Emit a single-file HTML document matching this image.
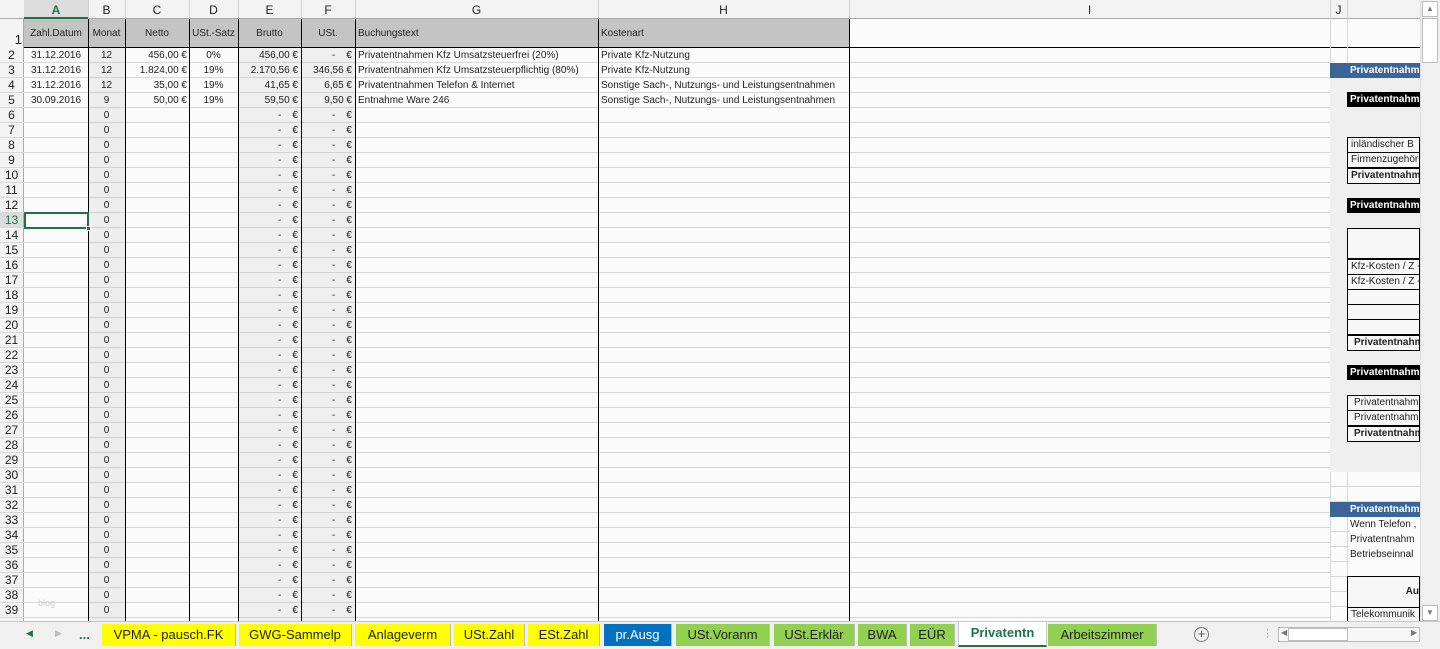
<!DOCTYPE html>
<html><head><meta charset="utf-8"><style>
*{margin:0;padding:0;box-sizing:border-box}
body{width:1440px;height:649px;overflow:hidden;background:#fff;font-family:"Liberation Sans",sans-serif;font-size:10px;color:#222;position:relative}
.a{position:absolute}
.t{position:absolute;line-height:15px;white-space:pre;font-size:10px}
.vl{position:absolute;top:19px;width:1px;height:602px}
.tab{position:absolute;top:624px;height:22px;line-height:22px;text-align:center;font-size:13px;color:#222;border-right:1px solid #bbb}
.box{position:absolute;left:1347px;width:73px;border:1px solid #000;background:#f7f7f7;line-height:14px;padding-left:3px;font-size:10px;overflow:hidden;white-space:nowrap}
.blk{position:absolute;left:1347px;width:73px;height:15px;background:#000;color:#fff;font-weight:bold;line-height:15px;padding-left:3px;font-size:10px;overflow:hidden;white-space:nowrap}
</style></head><body>
<div class="a" style="left:0;top:0;width:1420px;height:19px;background:#f3f3f3;border-bottom:1px solid #ababab"></div>
<div class="a" style="left:0;top:19px;width:24px;height:602px;background:#f3f3f3;border-right:1px solid #ababab"></div>
<div class="a" style="left:24px;top:48px;width:1306px;height:573px;background:#fbfbfb;background-image:repeating-linear-gradient(to bottom,transparent 0 14px,#d8d8d8 14px 15px)"></div>
<div class="a" style="left:88px;top:48px;width:37px;height:573px;background:#eeeeee;background-image:repeating-linear-gradient(to bottom,transparent 0 14px,#d0d0d0 14px 15px)"></div>
<div class="a" style="left:238px;top:48px;width:117px;height:573px;background:#efefef;background-image:repeating-linear-gradient(to bottom,transparent 0 14px,#d0d0d0 14px 15px)"></div>
<div class="a" style="left:0;top:48px;width:24px;height:573px;background-image:repeating-linear-gradient(to bottom,transparent 0 14px,#d8d8d8 14px 15px)"></div>
<div class="a" style="left:24px;top:19px;width:825px;height:29px;background:#c4c4c4;border-bottom:1px solid #000"></div>
<div class="a" style="left:849px;top:19px;width:571px;height:29px;background:#fbfbfb;border-bottom:1px solid #000"></div>
<div class="a" style="left:1330px;top:48px;width:90px;height:15px;background:#fbfbfb"></div>
<div class="a" style="left:1330px;top:63px;width:90px;height:409px;background:#efefef"></div>
<div class="a" style="left:1330px;top:472px;width:90px;height:149px;background:#fbfbfb;background-image:repeating-linear-gradient(to bottom,transparent 0 14px,#d8d8d8 14px 15px)"></div>
<div class="vl" style="left:88px;background:#000"></div>
<div class="vl" style="left:125px;background:#000"></div>
<div class="vl" style="left:189px;background:#000"></div>
<div class="vl" style="left:238px;background:#000"></div>
<div class="vl" style="left:301px;background:#000"></div>
<div class="vl" style="left:355px;background:#000"></div>
<div class="vl" style="left:598px;background:#000"></div>
<div class="vl" style="left:849px;background:#000"></div>
<div class="vl" style="left:1330px;background:#d8d8d8;height:44px"></div>
<div class="vl" style="left:1347px;background:#d8d8d8;height:44px"></div>
<div class="vl" style="left:1330px;top:472px;background:#d8d8d8;height:149px"></div>
<div class="vl" style="left:1347px;top:472px;background:#d8d8d8;height:104px"></div>
<div class="a" style="left:24px;top:0;width:1396px;height:19px;background-image:linear-gradient(#d0d0d0,#d0d0d0),linear-gradient(#d0d0d0,#d0d0d0),linear-gradient(#d0d0d0,#d0d0d0),linear-gradient(#d0d0d0,#d0d0d0),linear-gradient(#d0d0d0,#d0d0d0),linear-gradient(#d0d0d0,#d0d0d0),linear-gradient(#d0d0d0,#d0d0d0),linear-gradient(#d0d0d0,#d0d0d0),linear-gradient(#d0d0d0,#d0d0d0),linear-gradient(#d0d0d0,#d0d0d0);background-size:1px 19px;background-repeat:no-repeat;background-position:64px 0,101px 0,165px 0,214px 0,277px 0,331px 0,574px 0,825px 0,1306px 0,1323px 0"></div>
<div class="a" style="left:24px;top:0;width:64px;height:19px;background:#dcdcdc;border-bottom:2px solid #217346"></div>
<div class="a" style="top:3px;font-size:12px;left:0;width:1420px;height:16px">
<span class="a" style="left:24px;width:64px;text-align:center;color:#217346;font-weight:bold">A</span>
<span class="a" style="left:88px;width:37px;text-align:center">B</span>
<span class="a" style="left:125px;width:64px;text-align:center">C</span>
<span class="a" style="left:189px;width:49px;text-align:center">D</span>
<span class="a" style="left:238px;width:63px;text-align:center">E</span>
<span class="a" style="left:301px;width:54px;text-align:center">F</span>
<span class="a" style="left:355px;width:243px;text-align:center">G</span>
<span class="a" style="left:598px;width:251px;text-align:center">H</span>
<span class="a" style="left:849px;width:481px;text-align:center">I</span>
<span class="a" style="left:1330px;width:17px;text-align:center">J</span>
</div>
<div class="a" style="top:28px;left:0;width:860px;height:15px;font-size:10px">
<span class="a" style="left:24px;width:64px;text-align:center">Zahl.Datum</span>
<span class="a" style="left:88px;width:37px;text-align:center">Monat</span>
<span class="a" style="left:125px;width:64px;text-align:center">Netto</span>
<span class="a" style="left:189px;width:49px;text-align:center">USt.-Satz</span>
<span class="a" style="left:238px;width:63px;text-align:center">Brutto</span>
<span class="a" style="left:301px;width:54px;text-align:center">USt.</span>
<span class="a" style="left:358px">Buchungstext</span>
<span class="a" style="left:601px">Kostenart</span>
</div>
<div class="a" style="left:0;top:31px;width:22px;text-align:right;font-size:13px;line-height:17px">1</div>
<div class="t" style="left:0;top:48px;width:23px;text-align:center;font-size:12px">2
3
4
5
6
7
8
9
10
11
12
<span style="color:#217346;background:#dcdcdc;display:inline-block;width:23px">13</span>
14
15
16
17
18
19
20
21
22
23
24
25
26
27
28
29
30
31
32
33
34
35
36
37
38
39</div>
<div class="t" style="left:24px;top:48px;width:64px;text-align:center">31.12.2016
31.12.2016
31.12.2016
30.09.2016</div>
<div class="t" style="left:88px;top:48px;width:37px;text-align:center">12
12
12
9
0
0
0
0
0
0
0
0
0
0
0
0
0
0
0
0
0
0
0
0
0
0
0
0
0
0
0
0
0
0
0
0
0
0</div>
<div class="t" style="left:125px;top:48px;width:62px;text-align:right">456,00 €
1.824,00 €
35,00 €
50,00 €</div>
<div class="t" style="left:189px;top:48px;width:49px;text-align:center">0%
19%
19%
19%</div>
<div class="t" style="left:238px;top:48px;width:60px;text-align:right">456,00 €
2.170,56 €
41,65 €
59,50 €
-    €
-    €
-    €
-    €
-    €
-    €
-    €
-    €
-    €
-    €
-    €
-    €
-    €
-    €
-    €
-    €
-    €
-    €
-    €
-    €
-    €
-    €
-    €
-    €
-    €
-    €
-    €
-    €
-    €
-    €
-    €
-    €
-    €
-    €</div>
<div class="t" style="left:301px;top:48px;width:51px;text-align:right">-    €
346,56 €
6,65 €
9,50 €
-    €
-    €
-    €
-    €
-    €
-    €
-    €
-    €
-    €
-    €
-    €
-    €
-    €
-    €
-    €
-    €
-    €
-    €
-    €
-    €
-    €
-    €
-    €
-    €
-    €
-    €
-    €
-    €
-    €
-    €
-    €
-    €
-    €
-    €</div>
<div class="t" style="left:358px;top:48px">Privatentnahmen Kfz Umsatzsteuerfrei (20%)
Privatentnahmen Kfz Umsatzsteuerpflichtig (80%)
Privatentnahmen Telefon &amp; Internet
Entnahme Ware 246</div>
<div class="t" style="left:601px;top:48px">Private Kfz-Nutzung
Private Kfz-Nutzung
Sonstige Sach-, Nutzungs- und Leistungsentnahmen
Sonstige Sach-, Nutzungs- und Leistungsentnahmen</div>
<div class="a" style="left:38px;top:598px;color:#ccc;font-size:9px">blog</div>
<div class="a" style="left:24px;top:212px;width:65px;height:17px;border:2px solid #217346"></div>
<div class="a" style="left:86px;top:226px;width:5px;height:5px;background:#217346;border:1px solid #fff"></div>
<div class="a" style="left:1330px;top:63px;width:90px;height:15px;background:#3b6598;color:#fff;font-weight:bold;line-height:15px;padding-left:20px;white-space:nowrap;overflow:hidden">Privatentnahm</div>
<div class="blk" style="top:92px">Privatentnahm</div>
<div class="box" style="top:137px;height:16px">inländischer B</div>
<div class="box" style="top:152px;height:16px">Firmenzugehör</div>
<div class="box" style="top:167px;height:17px;font-weight:bold;border-top:2px solid #000">Privatentnahm</div>
<div class="blk" style="top:198px">Privatentnahm</div>
<div class="box" style="top:228px;height:32px;border-bottom:2px solid #000"></div>
<div class="box" style="top:259px;height:16px">Kfz-Kosten / Z -</div>
<div class="box" style="top:274px;height:16px">Kfz-Kosten / Z -</div>
<div class="box" style="top:289px;height:16px"></div>
<div class="box" style="top:304px;height:16px"></div>
<div class="box" style="top:319px;height:16px"></div>
<div class="box" style="top:334px;height:17px;font-weight:bold;border-top:2px solid #000;padding-left:6px">Privatentnahm</div>
<div class="blk" style="top:365px">Privatentnahm</div>
<div class="box" style="top:395px;height:16px;padding-left:6px">Privatentnahm</div>
<div class="box" style="top:410px;height:16px;padding-left:6px">Privatentnahm</div>
<div class="box" style="top:425px;height:17px;font-weight:bold;border-top:2px solid #000;padding-left:6px">Privatentnahm</div>
<div class="a" style="left:1330px;top:502px;width:90px;height:15px;background:#3b6598;color:#fff;font-weight:bold;line-height:15px;padding-left:20px;white-space:nowrap;overflow:hidden">Privatentnahm</div>
<div class="t" style="left:1350px;top:517px;width:70px;overflow:hidden;background:#fbfbfb">Wenn Telefon ,
Privatentnahm
Betriebseinnal</div>
<div class="box" style="top:576px;height:33px;border-bottom:2px solid #000;text-align:right;font-weight:bold;line-height:30px">Au</div>
<div class="box" style="top:607px;height:16px;border-bottom:none">Telekommunik</div>
<div class="a" style="left:1420px;top:0;width:20px;height:621px;background:#f0f0f0;border-left:1px solid #ddd"></div>
<div class="a" style="left:1422px;top:1px;width:16px;height:16px;border:1px solid #bbb;background:#fff;color:#777;font-size:8px;text-align:center;line-height:14px">▲</div>
<div class="a" style="left:1422px;top:18px;width:16px;height:45px;border:1px solid #bbb;background:#fff"></div>
<div class="a" style="left:1422px;top:605px;width:16px;height:16px;border:1px solid #bbb;background:#fff;color:#777;font-size:8px;text-align:center;line-height:14px">▼</div>
<div class="a" style="left:0;top:621px;width:1440px;height:28px;background:#f0f0f0;border-top:1px solid #c8c8c8"></div>
<div class="a" style="left:26px;top:628px;font-size:9px;color:#217346">◀</div>
<div class="a" style="left:55px;top:628px;font-size:9px;color:#bbb">▶</div>
<div class="a" style="left:79px;top:627px;font-size:13px;color:#217346;font-weight:bold">...</div>
<div class="tab" style="left:102px;width:134px;background:#ffff00">VPMA - pausch.FK</div>
<div class="tab" style="left:239px;width:113px;background:#ffff00">GWG-Sammelp</div>
<div class="tab" style="left:355px;width:96px;background:#ffff00">Anlageverm</div>
<div class="tab" style="left:454px;width:71px;background:#ffff00">USt.Zahl</div>
<div class="tab" style="left:528px;width:72px;background:#ffff00">ESt.Zahl</div>
<div class="tab" style="left:604px;width:68px;background:#0070c0;color:#fff">pr.Ausg</div>
<div class="tab" style="left:676px;width:94px;background:#92d050">USt.Voranm</div>
<div class="tab" style="left:774px;width:81px;background:#92d050">USt.Erklär</div>
<div class="tab" style="left:858px;width:49px;background:#92d050">BWA</div>
<div class="tab" style="left:910px;width:45px;background:#92d050">EÜR</div>
<div class="tab" style="left:958px;top:622px;height:25px;width:89px;background:#fff;color:#217346;font-weight:bold;border:1px solid #ccc;border-top:none;border-bottom:2px solid #217346">Privatentn</div>
<div class="tab" style="left:1048px;width:109px;background:#92d050">Arbeitszimmer</div>
<div class="a" style="left:1194px;top:627px;width:15px;height:15px;border:1px solid #777;border-radius:50%;color:#555;font-size:13px;line-height:12px;text-align:center">+</div>
<div class="a" style="left:1262px;top:627px;color:#bbb;font-size:11px">⋮</div>
<div class="a" style="left:1278px;top:627px;width:142px;height:15px;border:1px solid #bbb;background:#f7f7f7"></div>
<div class="a" style="left:1288px;top:628px;width:60px;height:13px;border:1px solid #bbb;background:#fff"></div>
<div class="a" style="left:1281px;top:628px;font-size:8px;color:#777">◀</div>
<div class="a" style="left:1411px;top:628px;font-size:8px;color:#777">▶</div>
</body></html>
